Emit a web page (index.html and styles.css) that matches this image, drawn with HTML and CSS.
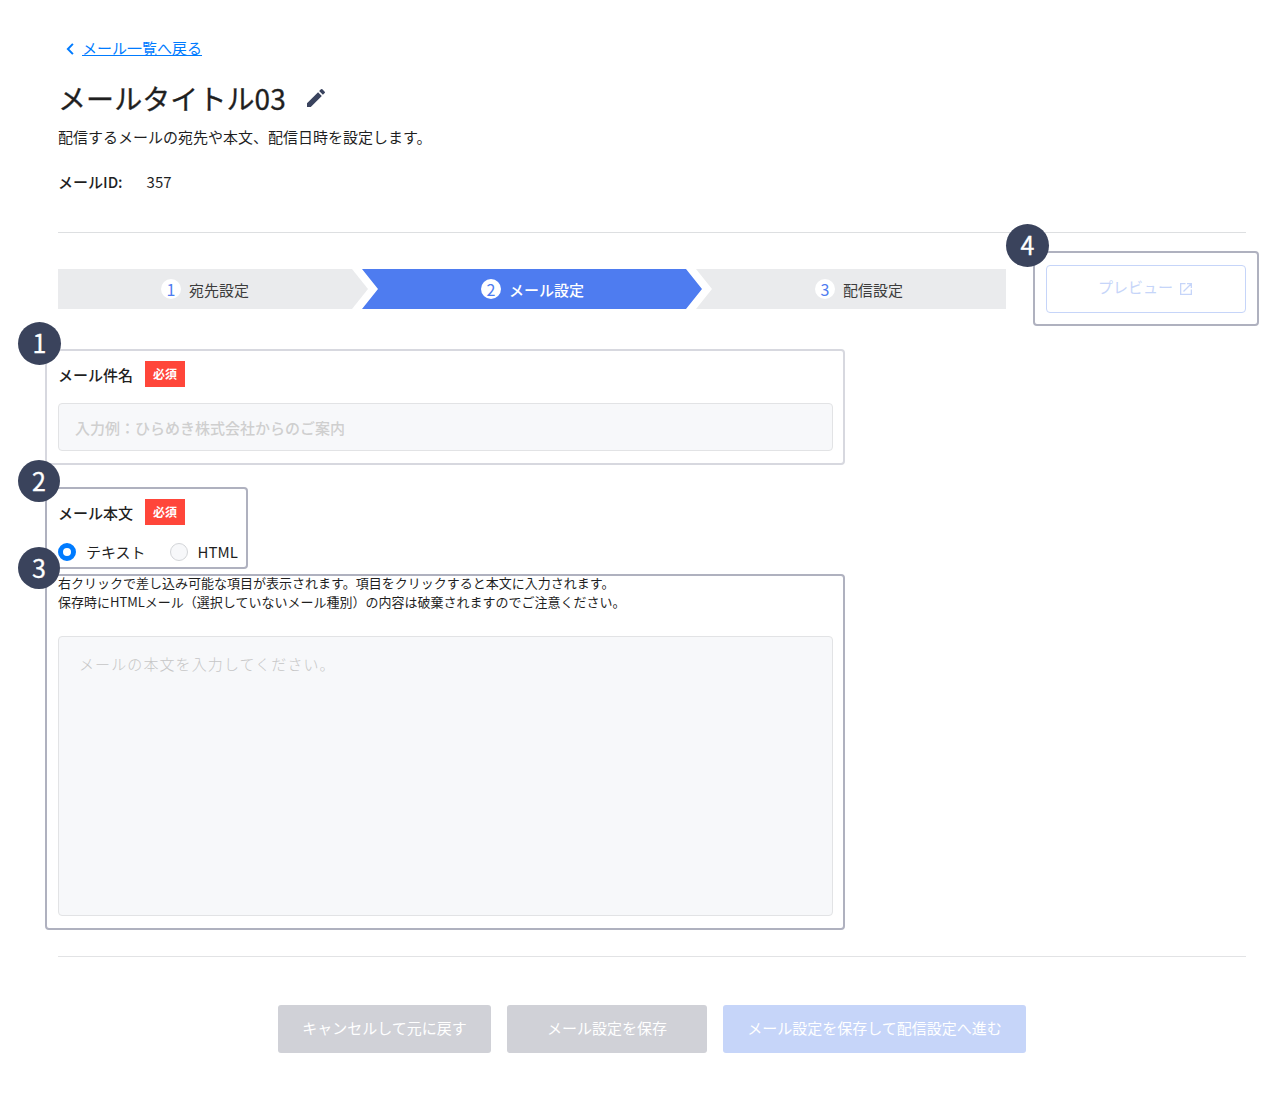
FILE: index.html
```html
<!DOCTYPE html>
<html lang="ja">
<head>
<meta charset="utf-8">
<title>メール設定</title>
<link rel="stylesheet" href="styles.css">
</head>
<body>
<main class="page">
  <a class="back" href="#">
    <svg class="back-icon" width="8" height="12" viewBox="0 0 8 12"><path d="M6.900.9 1.900 6l5 5.100" fill="none" stroke="#007bff" stroke-width="2"/></svg>
    <span class="back-text">メール一覧へ戻る</span>
  </a>
  <div class="title-row">
    <h1 class="title">メールタイトル03</h1>
    <svg class="edit-icon" width="24" height="24" viewBox="0 0 24 24"><path fill="#3a435e" d="M3 17.250V21h3.750L17.810 9.940l-3.750-3.750L3 17.250zM20.710 7.040a1 1 0 0 0 0-1.410l-2.340-2.340a1 1 0 0 0-1.410 0l-1.830 1.830 3.750 3.750 1.830-1.830z"/></svg>
  </div>
  <p class="lead">配信するメールの宛先や本文、配信日時を設定します。</p>
  <div class="meta"><span class="meta-label">メールID:</span><span>357</span></div>

  <div class="toolbar">
    <ol class="steps">
      <li class="step step-first"><span class="step-num">1</span>宛先設定</li>
      <li class="step step-current"><span class="step-num">2</span>メール設定</li>
      <li class="step step-last"><span class="step-num">3</span>配信設定</li>
    </ol>
    <div class="marked marked-preview">
      <span class="marker">4</span>
      <button class="preview" type="button" disabled>プレビュー
        <svg class="open-icon" width="12" height="12" viewBox="0 0 12 12"><path fill="none" stroke="#c6d5f9" stroke-width="1.300" d="M5.500.65H.65v10.700h10.700V6.500M7 .65h4.350V5M11.300.7 3.500 8.500"/></svg>
      </button>
    </div>
  </div>

  <section class="marked marked-subject">
    <span class="marker">1</span>
    <div class="label-row"><label class="label" for="subject">メール件名</label><span class="required">必須</span></div>
    <input class="field subject" id="subject" placeholder="入力例：ひらめき株式会社からのご案内" disabled>
  </section>

  <section class="marked marked-type">
    <span class="marker">2</span>
    <div class="label-row"><span class="label">メール本文</span><span class="required">必須</span></div>
    <div class="radios">
      <span class="radio radio-on"></span><span class="radio-text">テキスト</span>
      <span class="radio"></span><span class="radio-text">HTML</span>
    </div>
  </section>

  <section class="marked marked-body">
    <span class="marker">3</span>
    <p class="note">右クリックで差し込み可能な項目が表示されます。項目をクリックすると本文に入力されます。<br>保存時にHTMLメール（選択していないメール種別）の内容は破棄されますのでご注意ください。</p>
    <textarea class="field body-text" placeholder="メールの本文を入力してください。" disabled></textarea>
  </section>

  <footer class="actions">
    <button class="button button-cancel" type="button" disabled>キャンセルして元に戻す</button>
    <button class="button button-save" type="button" disabled>メール設定を保存</button>
    <button class="button button-next" type="button" disabled>メール設定を保存して配信設定へ進む</button>
  </footer>
</main>
</body>
</html>
```

FILE: styles.css
```css
* { box-sizing: border-box; }
body {
  margin: 0;
  background: #fff;
  color: #1f1f1f;
  font: 15px/24px "Noto Sans CJK JP", sans-serif;
}
h1, p, ol { margin: 0; padding: 0; }
button, input, textarea { font: inherit; margin: 0; }

.page { width: 1288px; height: 1100px; padding: 36px 42px 0 58px; }

.back { display: flex; align-items: center; gap: 8px; width: max-content; padding-left: 8px; color: #007bff; text-decoration: none; }
.back-icon { margin-top: 1px; }
.back-text { text-decoration: underline; }

.title-row { display: flex; align-items: center; gap: 18px; height: 40px; margin-top: 19px; }
.title { padding-bottom: 2px; font-size: 28px; line-height: 38px; font-weight: 400; letter-spacing: 0.080px; -webkit-text-stroke: 0.300px; }
.edit-icon { margin-top: -2px; }
.lead { margin-top: 6px; }
.meta { display: flex; gap: 24px; margin-top: 21px; }
.meta-label { font-weight: 500; }

.toolbar { display: flex; justify-content: space-between; margin-top: 38px; padding-top: 32px; border-top: 1px solid #dddfe1; }
.steps { display: flex; width: 948px; height: 40px; margin-top: 4px; list-style: none; color: #3c3c3c; }
.step { display: flex; align-items: center; justify-content: center; gap: 8px; width: 310px; padding-top: 1px; background: #eaebed; }
.step-first { padding-right: 16px; clip-path: polygon(0 0, 294px 0, 310px 20px, 294px 40px, 0 40px); }
.step-current { width: 340px; margin-left: -6px; padding-left: 1px; background: #4e7cf0; color: #fff; font-weight: 500; clip-path: polygon(0 0, 324px 0, 340px 20px, 324px 40px, 0 40px, 16px 20px); }
.step-last { margin-left: -6px; padding-left: 16px; clip-path: polygon(0 0, 310px 0, 310px 40px, 0 40px, 16px 20px); }
.step-num { width: 20px; height: 20px; margin-top: -2px; border-radius: 50%; background: #fff; color: #4e7cf0; font-size: 16px; line-height: 20px; text-align: center; font-weight: 400; }

.marked { position: relative; }
.marked::before { content: ""; position: absolute; inset: -12px -12px -14px -13px; border: 2px solid #afb1bf; border-radius: 4px; pointer-events: none; }
.marker {
  position: absolute; z-index: 2; left: -40px; top: -39px;
  width: 43px; height: 43px; border-radius: 50%;
  background: #3a435c; color: #fff;
  font-size: 25px; line-height: 40px; font-weight: 400; text-align: center;
  -webkit-text-stroke: 0.300px;
}
.marked-preview { width: 200px; }
.marked-preview::before { inset: -14px -13px -13px -13px; }
.marked-preview .marker { top: -41px; }
.preview { display: flex; align-items: center; justify-content: center; gap: 7px; width: 200px; height: 48px; padding: 0 2px 4px 0; border: 1px solid #c6d5f9; border-radius: 4px; background: #fff; color: #c6d5f9; font-weight: 400; }
.open-icon { margin-top: 3px; }

.marked-subject { width: 775px; margin-top: 48px; }
.marked-subject::before { border-color: #d7d8df; }
.label-row { display: flex; align-items: center; gap: 12px; height: 26px; }
.label { padding-top: 2px; font-weight: 500; }
.required { width: 40px; height: 26px; background: #ff463a; color: #fff; font-size: 12px; line-height: 26px; font-weight: 700; text-align: center; }
.field { display: block; width: 775px; border: 1px solid #e2e3e5; border-radius: 4px; background: #f7f8fa; resize: none; }
.field::placeholder { color: #cfcfcf; opacity: 1; }
.subject { height: 48px; margin-top: 16px; padding: 0 16px; font-weight: 500; }

.marked-type { width: 178px; margin-top: 48px; }
.marked-type::before { inset: -12px -12px -8px -13px; }
.marked-type .marker, .marked-body .marker { width: 42px; height: 42px; }
.radios { display: flex; align-items: center; height: 18px; margin-top: 18px; white-space: nowrap; }
.radio { flex: none; width: 18px; height: 18px; border: 1px solid #d3d5d8; border-radius: 50%; background: #f7f8fa; }
.radio-on { border: 5px solid #007bff; background: #fff; }
.radio-text { margin-left: 10px; }
.radio-text + .radio { margin-left: 24px; }

.marked-body { width: 775px; margin-top: 12px; }
.marked-body::before { inset: 1px -12px -14px -13px; }
.marked-body .marker { top: -26px; }
.note { font-size: 13px; line-height: 19px; }
.body-text { height: 280px; margin-top: 25px; padding: 15px 20px; font-weight: 300; letter-spacing: 1.100px; }
.body-text::placeholder { color: #c6c6c6; }

.actions { display: flex; justify-content: center; gap: 16px; margin-top: 40px; padding-top: 48px; border-top: 1px solid #e2e3e5; }
.button { height: 48px; padding: 0 0 2px; border: 0; border-radius: 3px; background: #d0d1d7; color: #fff; }
.button-cancel { width: 213px; }
.button-save { width: 200px; }
.button-next { width: 303px; background: #c6d5f9; }
```
